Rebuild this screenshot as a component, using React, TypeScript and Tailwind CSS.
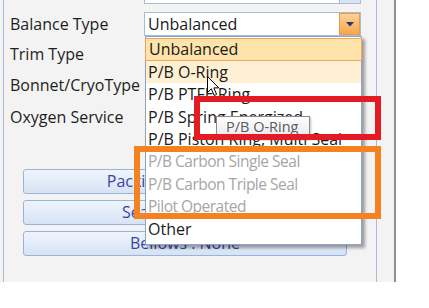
import clsx from 'clsx';

const font = 'font-["Open_Sans","Noto_Sans",sans-serif]';

const options = [
  { label: 'Unbalanced', state: 'selected' },
  { label: 'P/B O-Ring', state: 'hover' },
  { label: 'P/B PTFE Ring', state: 'normal' },
  { label: 'P/B Spring Energized', state: 'normal' },
  { label: 'P/B Piston Ring, Multi Seal', state: 'normal' },
  { label: 'P/B Carbon Single Seal', state: 'disabled' },
  { label: 'P/B Carbon Triple Seal', state: 'disabled' },
  { label: 'Pilot Operated', state: 'disabled' },
  { label: 'Other', state: 'normal' },
];

const labels = ['Trim Type', 'Bonnet/CryoType', 'Oxygen Service'];

const buttons = ['Packing : PTFE V-Ring', 'Seals : Elastomer', 'Bellows : None'];

function Cursor() {
  return (
    <svg
      className="absolute left-[207px] top-[76px]"
      width="13"
      height="21"
      viewBox="0 0 13 21"
    >
      <path
        d="M0.5 0.5 L0.5 16.5 L4.3 12.8 L7.2 19.5 L9.6 18.4 L6.8 11.9 L11.8 11.9 Z"
        fill="#fff"
        stroke="#000"
        strokeWidth="1"
        strokeLinejoin="round"
      />
    </svg>
  );
}

export default function App() {
  return (
    <div
      className={clsx(
        'relative h-[308px] w-[429px] overflow-hidden bg-white text-[16px] leading-none',
        font
      )}
    >
      {/* dialog panel */}
      <div className="h-[282px] w-[396px] border-r-2 border-[#8f8f8f] bg-[#f3f3f3] pl-[3px] pr-[17px]">
        <div className="flex h-full flex-col border-x border-[#a9bcd6]">
          {/* previous combo, scrolled almost out of view */}
          <div className="-mt-[20px] ml-[140px] flex h-[24px] w-[217px] items-center justify-end border border-[#a9bcd6] bg-white">
            <div className="h-full w-[21px] border-l border-[#a9bcd6] bg-[#d7e5f6]" />
          </div>

          <div className="mt-[8px] flex h-[24px] items-center">
            <span className="w-[140px] pl-[6px] text-[#1e1e1e]">Balance Type</span>
            <div className="flex h-[24px] w-[217px] items-center border border-[#a9bcd6] bg-white">
              <span className="flex-1 pl-[3px] text-[#1a1a1a]">Unbalanced</span>
              <div className="flex h-full w-[21px] items-center justify-center border border-[#eb9a4c] bg-gradient-to-b from-[#fdd199] to-[#f8a548]">
                <svg width="8" height="5" viewBox="0 0 8 5">
                  <path d="M0 0 H8 L4 4.5 Z" fill="#1f3b6e" />
                </svg>
              </div>
            </div>
          </div>

          <div className="mt-[2px] flex flex-col">
            {labels.map((label) => (
              <div key={label} className="flex h-[31.5px] items-center pl-[6px] text-[#1e1e1e]">
                {label}
              </div>
            ))}
          </div>

          <div className="ml-[19px] mt-[36px] flex w-[324px] flex-col gap-[6px]">
            {buttons.map((b) => (
              <div
                key={b}
                className="flex h-[25px] items-center justify-center rounded-[3px] border border-[#9db3d5] bg-gradient-to-b from-[#eef4fc] via-[#e3ecf9] to-[#d6e3f4] text-[#3a45a0]"
              >
                {b}
              </div>
            ))}
          </div>
        </div>
      </div>

      {/* open dropdown list */}
      <div className="absolute left-[145px] top-[36px] h-[209px] w-[217px] border border-[#8ea3c2] bg-white pt-px shadow-[3px_3px_3px_rgba(0,0,0,0.35)]">
        {options.map((o) => (
          <div
            key={o.label}
            className={clsx(
              'flex h-[22.5px] items-center whitespace-nowrap pl-[2px]',
              o.state === 'selected' && '-mx-px border border-[#f2a45a] bg-[#fee3ab] pl-[3px] text-[#1a1a1a]',
              o.state === 'hover' && 'bg-[#fef0d2] text-[#1a1a1a]',
              o.state === 'normal' && 'text-[#1a1a1a]',
              o.state === 'disabled' && 'text-[15.5px] tracking-[-0.5px] text-[#a6a6a6]'
            )}
          >
            {o.label}
          </div>
        ))}
      </div>

      <Cursor />

      {/* tooltip */}
      <div className="absolute left-[216px] top-[116px] flex h-[23px] w-[94px] items-center border border-[#8a8a8a] bg-gradient-to-b from-white to-[#e6e7ef] pl-[9px] text-[14.5px] text-[#5a5a5a] shadow-[1px_1px_2px_rgba(0,0,0,0.25)]">
        P/B O-Ring
      </div>

      {/* annotation boxes */}
      <div className="absolute left-[194px] top-[96px] h-[44px] w-[187px] border-[6px] border-[#e41b23]" />
      <div className="absolute left-[134px] top-[146px] h-[73px] w-[247px] border-[6px] border-[#f58220]" />
    </div>
  );
}
